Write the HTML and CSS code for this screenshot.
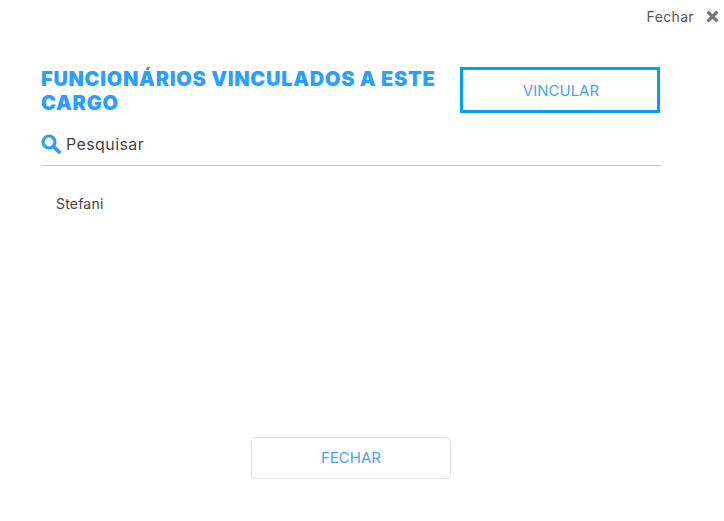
FILE: index.html
```html
<!DOCTYPE html>
<html lang="en">
<head>
    <meta charset="UTF-8">
    <meta name="viewport" content="width=device-width, initial-scale=1.0">
    <title>Funcionários vinculados</title>
    <link rel="stylesheet" href="styles.css">
</head>
<body>
    <div class="modal">
        <div class="top-bar">
            <span class="close-label">Fechar</span>
            <svg class="close-icon" viewBox="0 0 12 12" width="13" height="13" aria-hidden="true">
                <path d="M1.5 1.5L10.5 10.5M10.5 1.5L1.5 10.5" stroke="#757575" stroke-width="3" fill="none"/>
            </svg>
        </div>
        <div class="content">
            <div class="heading-row">
                <h1>FUNCIONÁRIOS VINCULADOS A ESTE CARGO</h1>
                <button class="btn-link" type="button">VINCULAR</button>
            </div>
            <div class="search">
                <svg class="search-icon" viewBox="0 0 20 20" width="20" height="20" aria-hidden="true">
                    <circle cx="8" cy="8" r="6" stroke="#2a9fff" stroke-width="3.2" fill="none"/>
                    <path d="M12.6 12.6L18 18" stroke="#2a9fff" stroke-width="3.8" stroke-linecap="round"/>
                </svg>
                <span>Pesquisar</span>
            </div>
            <ul class="list">
                <li>Stefani</li>
            </ul>
        </div>
        <div class="footer">
            <button class="btn-close" type="button">FECHAR</button>
        </div>
    </div>
</body>
</html>
```

FILE: styles.css
```css
body {
    font-family: Inter, "Noto Sans", sans-serif;
    background-color: #fff;
    margin: 0;
    padding: 0;
    height: 521px;
    overflow: hidden;
}

.modal {
    display: flex;
    flex-direction: column;
    height: 521px;
}

.top-bar {
    display: flex;
    justify-content: flex-end;
    align-items: center;
    gap: 12px;
    height: 33px;
    padding-right: 5px;
    color: #555;
    font-size: 14px;
    letter-spacing: 0.35px;
}

.content {
    flex: 1;
    width: 620px;
    margin-left: 41px;
    padding-top: 34px;
}

.heading-row {
    display: flex;
    justify-content: space-between;
    align-items: flex-start;
    width: 619px;
}

h1 {
    width: 412px;
    margin: 0;
    color: #2a9fff;
    font-size: 20px;
    font-weight: 900;
    letter-spacing: 0.7px;
    line-height: 24px;
}

.btn-link {
    width: 200px;
    height: 46px;
    padding-left: 8px;
    background-color: #fff;
    border: 3px solid #00a2e8;
    color: #4aa3f5;
    font-family: inherit;
    font-size: 15px;
}

.search {
    display: flex;
    align-items: center;
    gap: 5px;
    height: 43px;
    margin-top: 3px;
    padding-top: 4px;
    border-bottom: 1px solid #ccc;
    color: #444;
    font-size: 16px;
    letter-spacing: 0.4px;
}

.list {
    list-style: none;
    margin: 0;
    padding: 29px 0 0 15px;
    color: #444;
    font-size: 14px;
    letter-spacing: 0.2px;
}

.footer {
    display: flex;
    justify-content: center;
    padding: 0 22px 42px 0;
}

.btn-close {
    width: 200px;
    height: 42px;
    padding-bottom: 3px;
    background-color: #fff;
    border: 1px solid #e3e3e3;
    border-radius: 4px;
    color: #4aa3f5;
    font-family: inherit;
    font-size: 15px;
}
```
